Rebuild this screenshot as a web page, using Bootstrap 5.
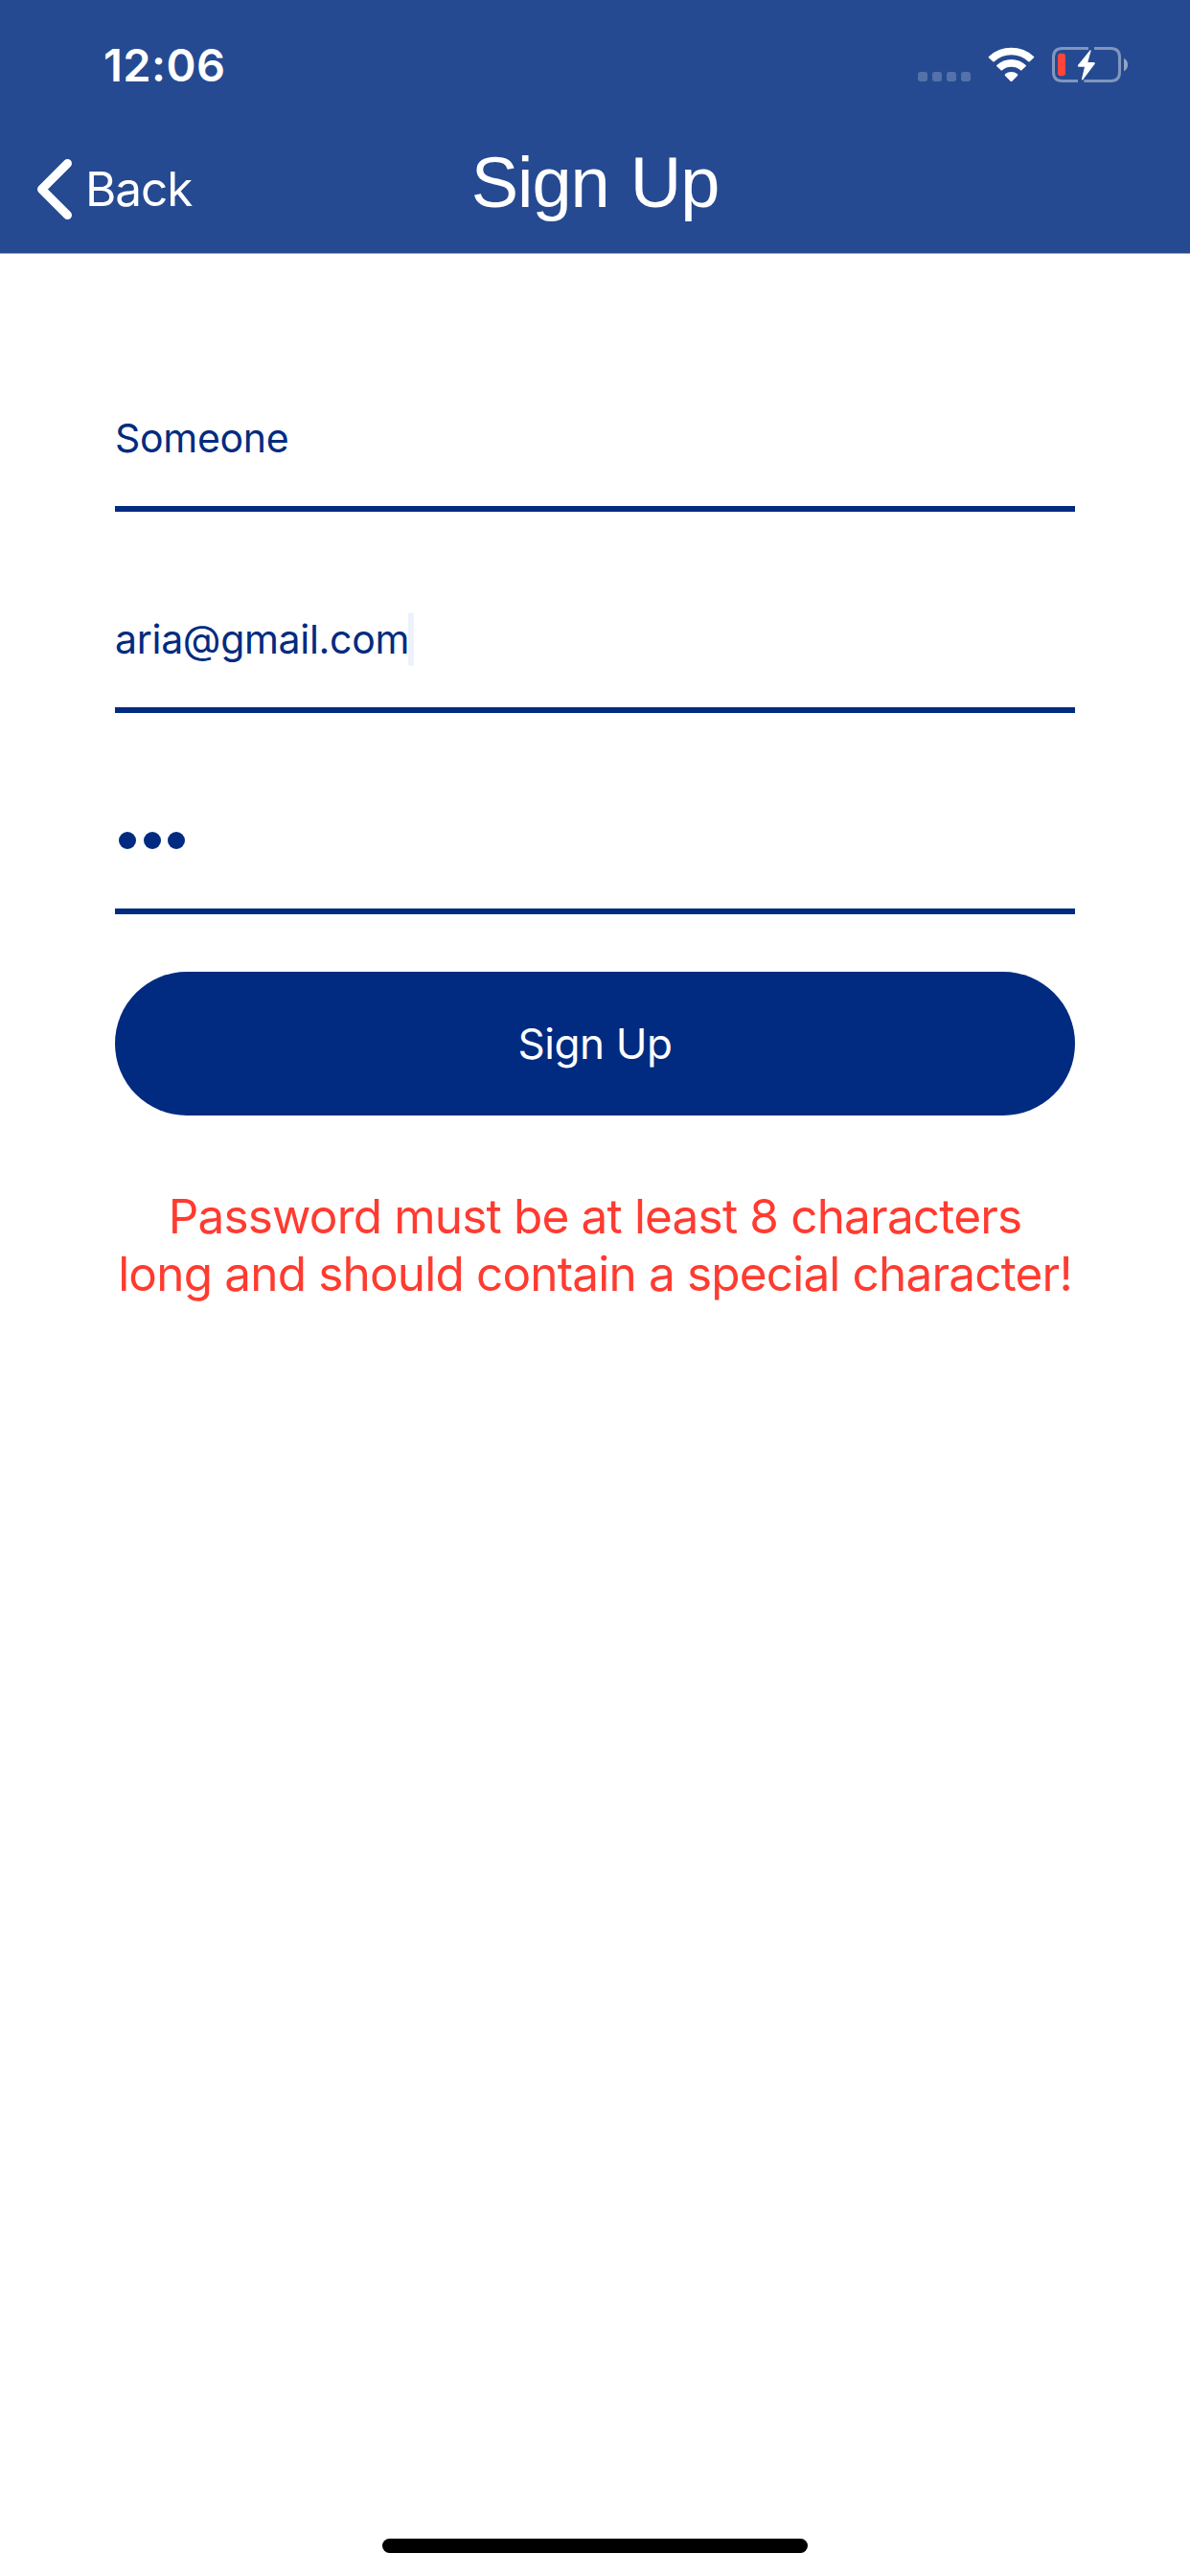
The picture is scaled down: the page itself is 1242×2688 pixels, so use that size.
<!DOCTYPE html>
<html lang="en">
<head>
<meta charset="utf-8">
<meta name="viewport" content="width=device-width, initial-scale=1">
<title>Sign Up</title>
<link href="https://cdn.jsdelivr.net/npm/bootstrap@5.3.0/dist/css/bootstrap.min.css" rel="stylesheet">
<style>
  :root { --navy: #002b80; --bar: #254a91; }
  body { font-family: Inter, "Noto Sans", sans-serif; color: var(--navy); background: #fff; height: 2688px; overflow: hidden; font-kerning: normal; }
  .app-header { background: var(--bar); color: #fff; height: 265px; border-bottom: 1px solid #a3a7ae; }
  .status-row { height: 135px; padding: 0 65px 0 108px; }
  .clock { font-size: 47px; font-weight: 600; letter-spacing: .46px; line-height: 60px; }
  .status-icons { gap: 18px; }
  .nav-row { height: 129px; }
  .nav-side { flex: 1 1 0; }
  .back-link { color: #fff; font-size: 49.5px; font-weight: 400; letter-spacing: -1.1px; line-height: 64px; padding: 1px 0 0 38px; gap: 14px; }
  .page-title { font-family: "Liberation Sans", Arial, sans-serif; font-size: 74px; letter-spacing: -1px; word-spacing: 2.5px; line-height: 90px; padding-bottom: 17px; }
  .signup-form { padding: 59px 120px 0; }
  .field-line { height: 210px; padding-top: 97px; border-bottom: 6px solid var(--navy); font-size: 41px; line-height: 72px; letter-spacing: -.3px; }
  .field-value { height: 72px; }
  .text-caret { width: 6px; height: 56px; border-radius: 3px; background: #edf1fe; margin-left: -1px; }
  .secret { gap: 7.5px; padding-left: 4px; }
  .secret-dot { width: 18px; height: 18px; border-radius: 50%; background: var(--navy); }
  .btn-signup { --bs-btn-bg: var(--navy); --bs-btn-color: #fff; --bs-btn-hover-bg: #00226a; --bs-btn-hover-color: #fff;
    height: 150px; margin-top: 60px; border: 0; padding: 0; font-size: 44px; font-weight: 400; letter-spacing: -.4px; line-height: 60px; }
  .error-text { color: #ff3b30; font-size: 49.5px; line-height: 60px; letter-spacing: -.83px; margin: 75px 0 0; }
  .home-bar { width: 444px; height: 15px; border-radius: 8px; background: #000; margin-bottom: 24px; }
</style>
</head>
<body class="d-flex flex-column">
<header class="app-header flex-shrink-0">
  <div class="status-row d-flex align-items-center justify-content-between">
    <div class="clock">12:06</div>
    <div class="status-icons d-flex align-items-center">
      <svg width="55" height="37" viewBox="84 87 165 111" fill="#fff" fill-opacity=".22" aria-hidden="true">
        <rect x="84" y="165" width="30" height="30" rx="8"/><rect x="129" y="165" width="30" height="30" rx="8"/><rect x="174" y="165" width="30" height="30" rx="8"/><rect x="219" y="165" width="30" height="30" rx="8"/>
      </svg>
      <svg width="49" height="37" viewBox="303 87 147 111" fill="#fff" aria-hidden="true">
        <path d="M306 117A103 103 0 0 1 447 117Q449 119 447 121L434 133Q432 134 430 133A78 78 0 0 0 323 133Q321 134 319 133L306 121Q304 119 306 117Z"/>
        <path d="M331 144A66 66 0 0 1 422 144Q424 146 422 148L409 160Q407 162 405 160A44 44 0 0 0 348 160Q346 162 344 160L331 148Q329 146 331 144Z"/>
        <path d="M357 172A30 30 0 0 1 396 172Q398 174 396 177L379 194Q376.500 196 374 194L357 177Q355 174 357 172Z"/>
      </svg>
      <svg width="79" height="37" viewBox="504 87 237 111" aria-hidden="true">
        <g fill="none" stroke="#fff" stroke-opacity=".42" stroke-width="9">
          <path d="M618 91.500H536Q508.500 91.500 508.500 119V166Q508.500 193.500 536 193.500H585"/>
          <path d="M636 91.500H688Q715.500 91.500 715.500 119V166Q715.500 193.500 688 193.500H604"/>
        </g>
        <path d="M729 122Q741 128 741 142.500T729 163Z" fill="#fff" fill-opacity=".5"/>
        <rect x="522" y="107" width="24" height="71" rx="9" fill="#ff453a"/>
        <path d="M624 96L585 144Q583 149 588 149H606L597 187Q597 193 601 189L638 140Q640 135 635 135H616L626 98Z" fill="#fff"/>
      </svg>
    </div>
  </div>
  <nav class="nav-row d-flex align-items-center">
    <div class="nav-side">
      <a href="#" class="back-link d-inline-flex align-items-center text-decoration-none">
        <svg width="37" height="63" viewBox="0 0 37 63" fill="none" stroke="#fff" stroke-linecap="round" aria-hidden="true">
          <path d="M32.500 4.500L5.500 31.500L32.500 58.500" stroke-width="9" stroke-linejoin="round"/>
        </svg>
        <span>Back</span>
      </a>
    </div>
    <div class="page-title">Sign Up</div>
    <div class="nav-side"></div>
  </nav>
</header>
<main class="signup-form">
  <div class="field-line"><div class="field-value d-flex align-items-center">Someone</div></div>
  <div class="field-line"><div class="field-value d-flex align-items-center"><span>aria@gmail.com</span><span class="text-caret"></span></div></div>
  <div class="field-line"><div class="field-value secret d-flex align-items-center" role="img"><span class="secret-dot"></span><span class="secret-dot"></span><span class="secret-dot"></span></div></div>
  <button type="button" class="btn btn-signup rounded-pill w-100">Sign Up</button>
  <p class="error-text text-center text-nowrap">Password must be at least 8 characters<br>long and should contain a special character!</p>
</main>
<div class="home-bar mt-auto mx-auto flex-shrink-0"></div>
<script src="https://cdn.jsdelivr.net/npm/bootstrap@5.3.0/dist/js/bootstrap.bundle.min.js"></script>
</body>
</html>
